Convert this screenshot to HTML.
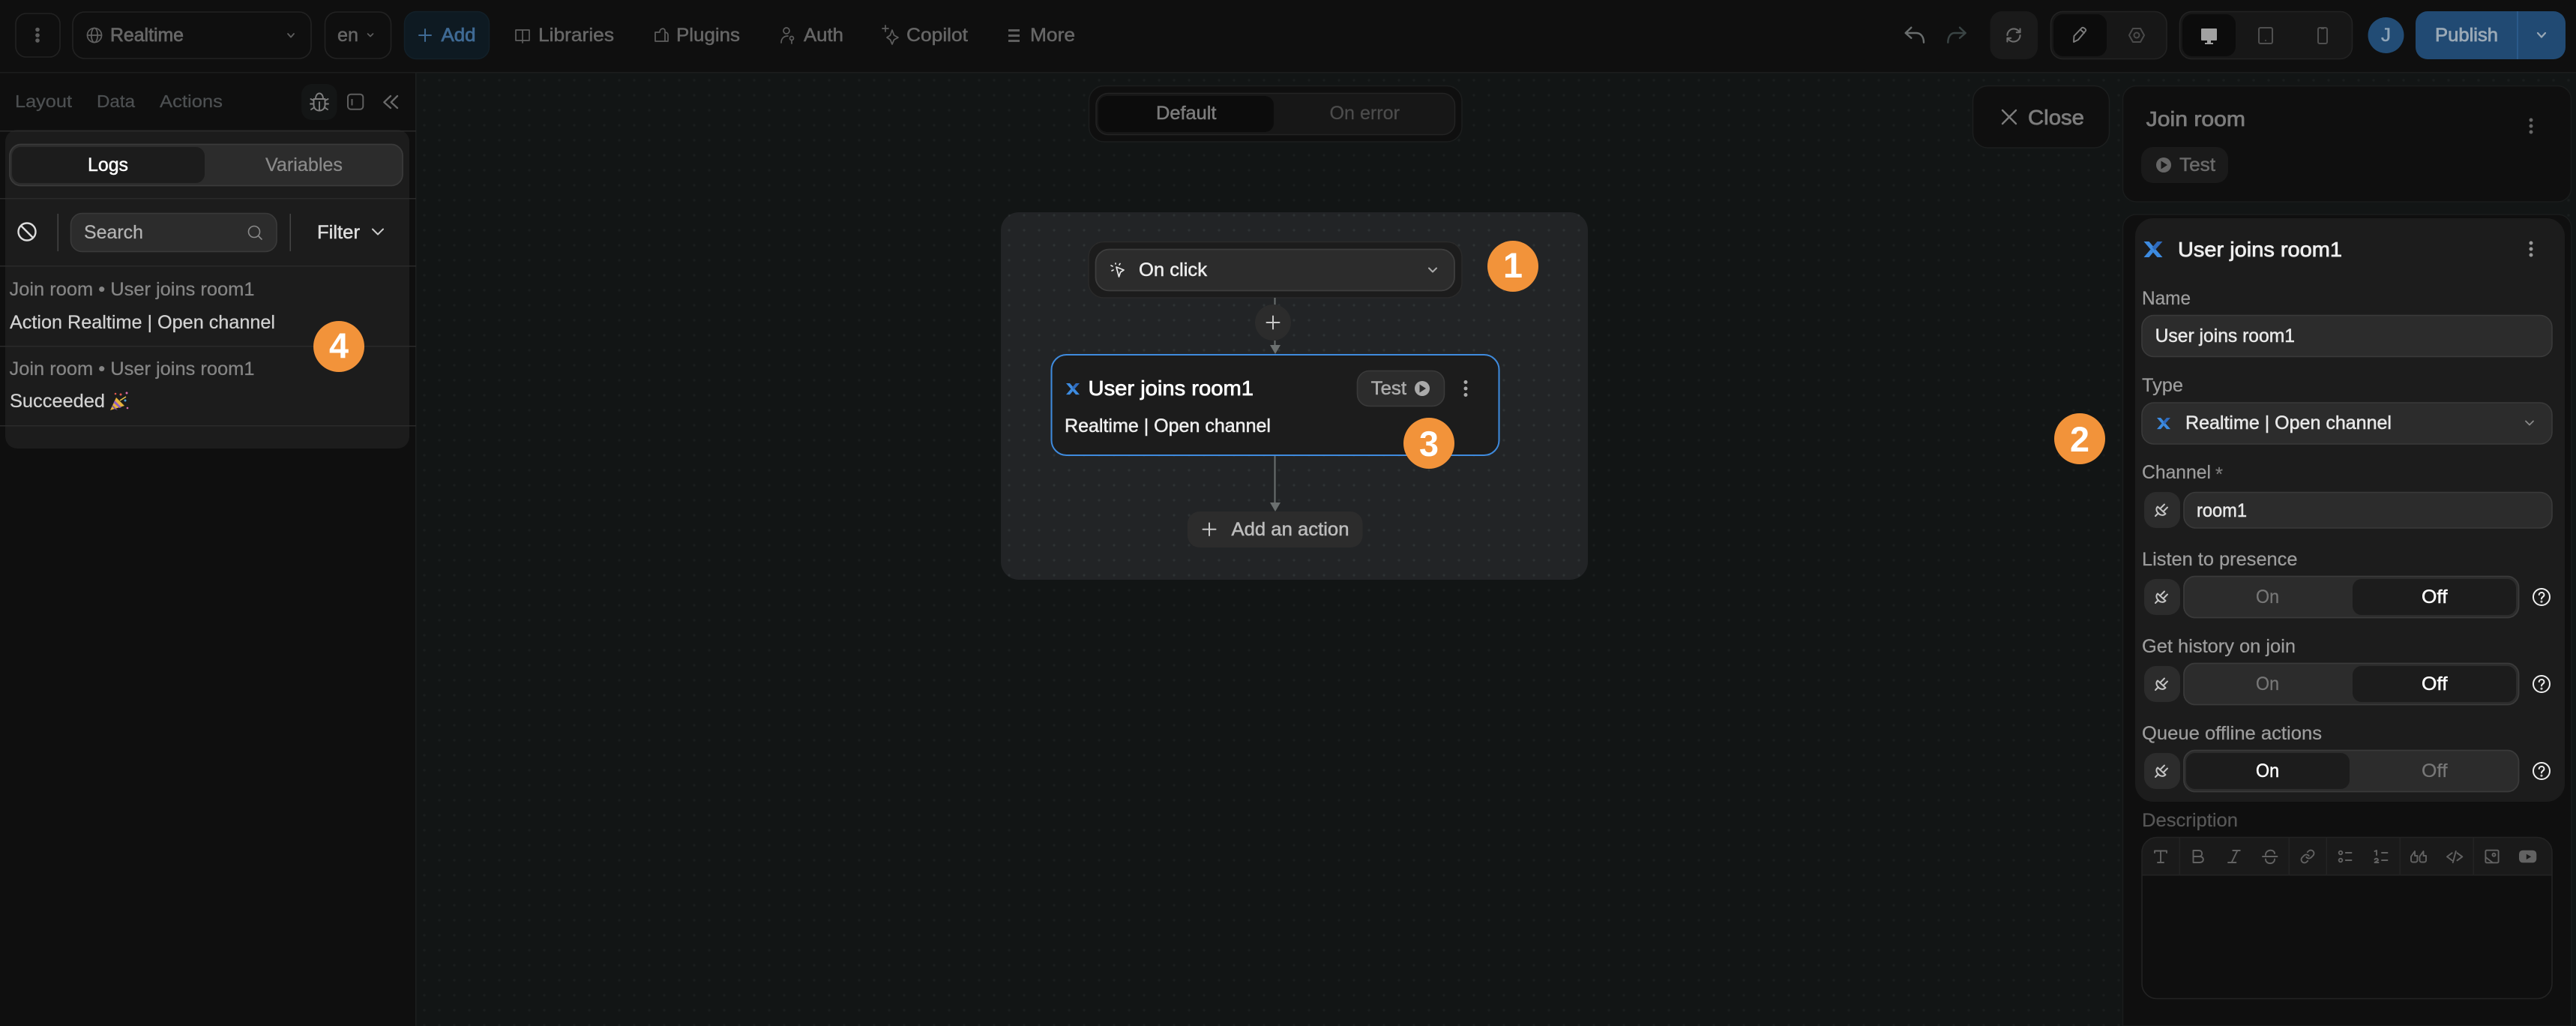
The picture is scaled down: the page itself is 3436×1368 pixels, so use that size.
<!DOCTYPE html>
<html lang="en">
<head>
<meta charset="utf-8">
<title>Realtime workflow</title>
<style>
html,body{margin:0;padding:0;background:#0f0f0f;width:3436px;height:1368px;overflow:hidden}
svg{display:block}
text{font-family:"Liberation Sans",Arial,sans-serif;font-size:25px;fill:currentColor;stroke:currentColor;stroke-width:.25px;white-space:pre}
.m{stroke-width:.5px}
.b{font-weight:700;stroke-width:0}
.s{stroke-width:.75px}
.ic{fill:none;stroke-linecap:round;stroke-linejoin:round}
</style>
</head>
<body>
<svg xmlns="http://www.w3.org/2000/svg" width="3436" height="1368" viewBox="0 0 3436 1368">
<defs>
<pattern id="d1" x="6" y="7" width="20" height="20" patternUnits="userSpaceOnUse"><circle cx="0" cy="0" r="1.6" fill="#1a1e1e"/><circle cx="20" cy="0" r="1.6" fill="#1a1e1e"/><circle cx="0" cy="20" r="1.6" fill="#1a1e1e"/><circle cx="20" cy="20" r="1.6" fill="#1a1e1e"/></pattern>
<pattern id="d2" x="6" y="7" width="20" height="20" patternUnits="userSpaceOnUse"><circle cx="0" cy="0" r="1.6" fill="#2e3234"/><circle cx="20" cy="0" r="1.6" fill="#2e3234"/><circle cx="0" cy="20" r="1.6" fill="#2e3234"/><circle cx="20" cy="20" r="1.6" fill="#2e3234"/></pattern>
<g id="plug" class="ic" stroke="#c4c4c4" stroke-width="2"><path d="M-9 8 L-5 4 M-6 -4.500 L4.500 5 C2 7.500 -2 7.500 -5 4.500 C-8 1.500 -8.500 -2 -6 -4.500 Z M-2 -2.500 L3 -7.500 M2 1.500 L7 -3.500"/></g>
<g id="help" class="ic" stroke="#eeeeee" stroke-width="2"><circle r="11"/><path d="M-3.300 -3 C-3 -7 3.500 -7 3.500 -2.800 C3.500 -.4 0 -.2 0 2.500"/><circle cx="0" cy="6.300" r=".5"/></g>
<g id="x1"><path d="M0 0 L7 0 L25 21 L18 21 Z" fill="#3d8be0"/><path d="M25 0 L18 0 L11 8 L14.500 12 Z" fill="#2f6bbd"/><path d="M0 21 L7 21 L12.500 14.500 L9 10.500 Z" fill="#3d8be0"/></g>
</defs>

<!-- base -->
<rect width="3436" height="1368" fill="#0f0f0f"/>

<!-- canvas -->
<rect x="555" y="97" width="2881" height="1271" fill="#121515"/>
<rect x="555" y="97" width="2881" height="1271" fill="url(#d1)"/>
<rect x="0" y="96" width="3436" height="1.5" fill="#1c1d1d"/>
<rect x="554" y="97" width="1.5" height="1271" fill="#1c1f1f"/>

<!-- top bar -->
<rect x="21" y="18" width="59" height="58" rx="14" fill="none" stroke="#222" stroke-width="1.6"/>
<circle cx="50" cy="39.500" r="2.800" fill="#5e5e5e"/><circle cx="50" cy="47" r="2.800" fill="#5e5e5e"/><circle cx="50" cy="54" r="2.800" fill="#5e5e5e"/>
<rect x="97" y="16" width="318" height="62" rx="16" fill="none" stroke="#222" stroke-width="1.6"/>
<g class="ic" stroke="#606060" stroke-width="1.7"><circle cx="126" cy="47" r="9.500"/><ellipse cx="126" cy="47" rx="4.200" ry="9.500"/><path d="M116.500 47 H135.500"/></g>
<text class="s" x="147" y="55" textLength="98" lengthAdjust="spacingAndGlyphs" style="color:#666;font-size:25px">Realtime</text>
<path class="ic" d="M384 45 L388 49.500 L392 45" stroke="#5e5e5e" stroke-width="1.8"/>
<rect x="433.500" y="16" width="88" height="62" rx="16" fill="none" stroke="#222" stroke-width="1.6"/>
<text class="m" x="450" y="55" textLength="28" lengthAdjust="spacingAndGlyphs" style="color:#666">en</text>
<path class="ic" d="M490.500 45 L494 48.500 L497.500 45" stroke="#5e5e5e" stroke-width="1.6"/>
<rect x="539.500" y="15.500" width="113" height="63" rx="16" fill="#0e1a22" stroke="#122029" stroke-width="1.5"/>
<path class="ic" d="M567 39 V55 M559 47 H575" stroke="#3f6a94" stroke-width="2"/>
<text class="s" x="588.500" y="55" textLength="46" lengthAdjust="spacingAndGlyphs" style="color:#3f6a94">Add</text>

<g class="ic" stroke="#5e5e5e" stroke-width="1.7"><path d="M688 40 H697 V54 H688 Z M697 40 H706 V54 H697 Z M697 54 V57"/></g>
<text class="m" x="718" y="55" textLength="101" lengthAdjust="spacingAndGlyphs" style="color:#666">Libraries</text>
<g class="ic" stroke="#5e5e5e" stroke-width="1.7"><path d="M874 43 H880 C880 37 887 37 887 41 V55 H874 Z M887 43 C889 43 891 44 891 47 V55 H887"/></g>
<text class="m" x="902" y="55" textLength="85" lengthAdjust="spacingAndGlyphs" style="color:#666">Plugins</text>
<g class="ic" stroke="#5e5e5e" stroke-width="1.7"><circle cx="1049" cy="41" r="4"/><path d="M1042 57 C1042 50 1047 48 1051 48"/><circle cx="1056" cy="51" r="2.500"/><path d="M1056 53.500 V58"/></g>
<text class="m" x="1072" y="55" textLength="53" lengthAdjust="spacingAndGlyphs" style="color:#666">Auth</text>
<g class="ic" stroke="#5e5e5e" stroke-width="1.700"><path d="M1190 40 L1192.500 47 L1198 50 L1192.500 53 L1190 59 L1187.500 53 L1183 50 L1187.500 47 Z"/><path d="M1181 34 V42 M1177 38 H1185"/></g>
<text class="m" x="1209" y="55" textLength="82" lengthAdjust="spacingAndGlyphs" style="color:#666">Copilot</text>
<g fill="#5e5e5e"><rect x="1345" y="39" width="15" height="3"/><rect x="1345" y="46" width="15" height="3"/><rect x="1345" y="53" width="15" height="3"/></g>
<text class="m" x="1374" y="55" textLength="60" lengthAdjust="spacingAndGlyphs" style="color:#666">More</text>

<path class="ic" d="M2549.300 36.700 L2541.700 44 L2549.300 50.700 M2541.700 44 H2556 C2562 44 2566 49 2566 56.700" stroke="#6a6e6e" stroke-width="2.400"/>
<path class="ic" d="M2614 36.700 L2621.700 44 L2614 50.700 M2621.700 44 H2607 C2602 44 2598.300 49 2598.300 56.700" stroke="#3a4444" stroke-width="2.400"/>
<rect x="2654.500" y="15" width="63.500" height="64" rx="16" fill="#1a1a1a"/>
<g transform="translate(2686 47) scale(.95) translate(-12 -12)"><path class="ic" stroke="#6c6c6c" stroke-width="2.200" d="M3 12a9 9 0 0 1 9-9 9.750 9.750 0 0 1 6.740 2.740L21 8 M21 3v5h-5 M21 12a9 9 0 0 1-9 9 9.750 9.750 0 0 1-6.740-2.740L3 16 M8 16H3v5"/></g>
<rect x="2735.500" y="15.500" width="154.500" height="63" rx="16" fill="#171717" stroke="#232323" stroke-width="1.500"/>
<rect x="2739" y="19" width="71" height="56" rx="13" fill="#0c0c0c"/>
<g class="ic" stroke="#7c7c7c" stroke-width="1.900"><path d="M2766 56 L2766.500 48 L2777 37 C2779 36 2783 39 2782 41 L2772 53 Z M2775 39.500 L2780 44"/></g>
<g class="ic" stroke="#4a4a4a" stroke-width="2"><path d="M2840 47 L2845 38 H2855 L2860 47 L2855 56 H2845 Z"/><circle cx="2850" cy="47" r="3.500"/></g>
<rect x="2907.500" y="15.500" width="230" height="63" rx="16" fill="#171717" stroke="#232323" stroke-width="1.500"/>
<rect x="2911" y="19" width="71" height="56" rx="13" fill="#0c0c0c"/>
<rect x="2936" y="38" width="21" height="16" rx="1" fill="#a2a2a2"/><path d="M2944 54 H2949 V57 H2952 V59 H2941 V57 H2944 Z" fill="#a2a2a2"/>
<rect x="3013" y="37" width="18" height="21" rx="2" fill="none" stroke="#4f4f4f" stroke-width="2"/><circle cx="3022" cy="54" r="1" fill="#4f4f4f"/>
<rect x="3092" y="37" width="12" height="21" rx="2" fill="none" stroke="#4f4f4f" stroke-width="2"/><rect x="3096" y="37" width="4" height="2" fill="#4f4f4f"/>
<circle cx="3182.500" cy="47" r="24" fill="#224c75"/>
<text class="m" x="3176" y="55" textLength="13" lengthAdjust="spacingAndGlyphs" style="color:#8fa5b8">J</text>
<path d="M3238 15 H3358 V79 H3238 A16 16 0 0 1 3222 63 V31 A16 16 0 0 1 3238 15 Z" fill="#214a73"/>
<path d="M3359 15 H3406 A16 16 0 0 1 3422 31 V63 A16 16 0 0 1 3406 79 H3359 Z" fill="#214a73"/>
<rect x="3357" y="15" width="2" height="64" fill="#2a5a8a"/>
<text class="s" x="3248" y="55" textLength="84" lengthAdjust="spacingAndGlyphs" style="color:#9aa9b6">Publish</text>
<path class="ic" d="M3385 44 L3390 49.500 L3395 44" stroke="#9aa9b6" stroke-width="2.200"/>

<!-- left panel -->
<text x="20" y="143" textLength="76" lengthAdjust="spacingAndGlyphs" style="color:#4d5052;font-size:23px">Layout</text>
<text x="129" y="143" textLength="51" lengthAdjust="spacingAndGlyphs" style="color:#4d5052;font-size:23px">Data</text>
<text x="213" y="143" textLength="84" lengthAdjust="spacingAndGlyphs" style="color:#4d5052;font-size:23px">Actions</text>
<rect x="402" y="112" width="47.500" height="48" rx="14" fill="#141616"/>
<path class="ic" stroke="#7f7f7f" stroke-width="1.900" d="M418.500 132 H433.500 M421 132 C421 122 431 122 431 132 M418.500 132 V140 C418.500 150 433.500 150 433.500 140 V132 M426 136 V147 M414.500 132 L418.500 134 M437.500 132 L433.500 134 M414 138.500 H418 M438 138.500 H434 M415 146 L419.500 143 M437 146 L432.500 143"/>
<rect x="464" y="125.700" width="20.300" height="20" rx="4" fill="none" stroke="#5f5f5f" stroke-width="2"/><path d="M469.500 132 V140.500" stroke="#5f5f5f" stroke-width="2"/>
<path class="ic" stroke="#6a6a6a" stroke-width="2.300" d="M521 128 L512.300 136.300 L521 144 M530 128 L521.700 136.300 L530 144"/>

<rect x="7" y="173" width="539" height="425" rx="16" fill="#1c1c1c"/>
<g fill="#2a2a2a"><rect x="0" y="174" width="555" height="1.500"/><rect x="0" y="264" width="555" height="1.500"/><rect x="0" y="354" width="555" height="1.500"/><rect x="0" y="461" width="555" height="1.500"/><rect x="0" y="567" width="555" height="1.500"/></g>
<rect x="13" y="192.500" width="524" height="55" rx="15" fill="#2c2c2c" stroke="#3a3a3a" stroke-width="1.800"/>
<rect x="16" y="196" width="257" height="48" rx="12" fill="#1c1c1c"/>
<text class="m" x="117" y="228" textLength="54" lengthAdjust="spacingAndGlyphs" style="color:#fff">Logs</text>
<text x="354" y="228" textLength="103" lengthAdjust="spacingAndGlyphs" style="color:#8a8a8a">Variables</text>

<g class="ic" stroke="#dddddd" stroke-width="2.400"><circle cx="36" cy="309" r="11.500"/><path d="M28 301 L44 317"/></g>
<rect x="76.500" y="285" width="1.500" height="50" fill="#444"/>
<rect x="94.500" y="284.500" width="274.500" height="51" rx="15" fill="#2c2c2c" stroke="#3a3a3a" stroke-width="1.600"/>
<text x="112" y="318" textLength="79" lengthAdjust="spacingAndGlyphs" style="color:#b4b4b4">Search</text>
<g class="ic" stroke="#8a8a8a" stroke-width="1.600"><circle cx="339" cy="309" r="7.500"/><path d="M345 315 L349 319"/></g>
<rect x="386.500" y="285" width="1.500" height="50" fill="#444"/>
<text class="m" x="423" y="318" textLength="57" lengthAdjust="spacingAndGlyphs" style="color:#ddd">Filter</text>
<path class="ic" d="M497 305.500 L504 312.500 L511 305.500" stroke="#ccc" stroke-width="2"/>

<text x="12.500" y="394" textLength="327" lengthAdjust="spacingAndGlyphs" style="color:#858585">Join room • User joins room1</text>
<text x="13" y="438" textLength="354" lengthAdjust="spacingAndGlyphs" style="color:#d2d2d2">Action Realtime | Open channel</text>
<text x="12.500" y="500" textLength="327" lengthAdjust="spacingAndGlyphs" style="color:#858585">Join room • User joins room1</text>
<text x="13" y="543" textLength="127" lengthAdjust="spacingAndGlyphs" style="color:#d2d2d2">Succeeded</text>
<g><path d="M147 547 L155 530 L166 541 Z" fill="#e6b23c"/><path d="M150 540 L157 547 L153 545.500 L149.500 542 Z" fill="#7a4fa8"/><path d="M153 534 L162 543 L159.500 544 L151.500 537 Z" fill="#8f5cc0"/><circle cx="161" cy="526" r="1.500" fill="#e0574f"/><circle cx="169" cy="524" r="1.500" fill="#d86aa8"/><circle cx="167" cy="534" r="1.500" fill="#4ea3d8"/><circle cx="154" cy="525" r="1.300" fill="#e0574f"/><circle cx="170" cy="544" r="1.300" fill="#d86aa8"/><path d="M160 534 L168 529" stroke="#e8c24a" stroke-width="1.500"/></g>

<!-- Default / on error -->
<rect x="1452.500" y="114.500" width="497.500" height="74.500" rx="20" fill="#0f0f0f" stroke="#1c1e1e" stroke-width="1.500"/>
<rect x="1462" y="124.500" width="478.500" height="55" rx="16" fill="#171717" stroke="#232323" stroke-width="1.500"/>
<rect x="1465" y="128" width="234" height="48" rx="12" fill="#0c0c0c"/>
<text class="m" x="1542" y="159" textLength="80.500" lengthAdjust="spacingAndGlyphs" style="color:#7c7c7c">Default</text>
<text x="1773.500" y="159" textLength="93.500" lengthAdjust="spacingAndGlyphs" style="color:#4c4c4c">On error</text>

<!-- flow panel -->
<rect x="1335" y="283" width="783" height="490" rx="24" fill="#222426"/>
<rect x="1335" y="283" width="783" height="490" rx="24" fill="url(#d2)"/>
<rect x="1452" y="322.500" width="498" height="74.500" rx="20" fill="#1c1c1c" stroke="#2a2a2a" stroke-width="1.500"/>
<rect x="1461.500" y="332.500" width="478.500" height="55" rx="18" fill="#2c2c2c" stroke="#3e3e3e" stroke-width="1.800"/>
<g class="ic" stroke="#e8e8e8" stroke-width="1.700"><path d="M1489 356 L1499 360 L1494.500 363 L1492.500 369 Z"/><path d="M1488 351 L1488 352 M1482 354 L1484 355 M1483 361 L1485 360 M1494 351.500 L1493 353"/></g>
<text class="m" x="1519" y="368" textLength="91" lengthAdjust="spacingAndGlyphs" style="color:#eee">On click</text>
<path class="ic" d="M1906 357.500 L1911 362.500 L1916 357.500" stroke="#aaa" stroke-width="2"/>

<rect x="1699.500" y="397" width="2" height="11" fill="#6b7070"/>
<circle cx="1698" cy="430" r="24" fill="#2c2c2c"/>
<path class="ic" d="M1698 421.500 V438.500 M1689.500 430 H1706.500" stroke="#c8c8c8" stroke-width="2"/>
<rect x="1699.500" y="454" width="2" height="7" fill="#6b7070"/>
<path d="M1694 460 H1708 L1701 472 Z" fill="#6b7070"/>

<rect x="1402.500" y="473" width="597" height="134" rx="20" fill="#1c1c1c" stroke="#3f8bde" stroke-width="2"/>
<use href="#x1" transform="translate(1422 511) scale(.72)"/>
<text class="s" x="1451.500" y="527" textLength="220.500" lengthAdjust="spacingAndGlyphs" style="color:#fff;font-size:28px">User joins room1</text>
<rect x="1810.500" y="494.500" width="116" height="47" rx="16" fill="#2c2c2c" stroke="#3a3a3a" stroke-width="1.600"/>
<text class="m" x="1828.700" y="526" textLength="47.300" lengthAdjust="spacingAndGlyphs" style="color:#ababab">Test</text>
<circle cx="1897" cy="518" r="10" fill="#aaa"/><path d="M1893.500 512.500 L1902 518 L1893.500 523.500 Z" fill="#2c2c2c"/>
<circle cx="1955" cy="509.500" r="2.500" fill="#aaa"/><circle cx="1955" cy="518" r="2.500" fill="#aaa"/><circle cx="1955" cy="526.500" r="2.500" fill="#aaa"/>
<text x="1420" y="576" textLength="275" lengthAdjust="spacingAndGlyphs" class="m" style="color:#eee">Realtime | Open channel</text>

<rect x="1699.500" y="608" width="2" height="63" fill="#6b7070"/>
<path d="M1694 670 H1708 L1701 682 Z" fill="#6b7070"/>
<rect x="1584" y="682" width="233.500" height="48" rx="16" fill="#2c2c2c"/>
<path class="ic" d="M1613 697.500 V714 M1604.500 705.700 H1621.500" stroke="#c8c8c8" stroke-width="2"/>
<text class="m" x="1642.500" y="714" textLength="157" lengthAdjust="spacingAndGlyphs" style="color:#bcbcbc">Add an action</text>

<!-- Close / right header -->
<rect x="2631.500" y="114.500" width="182" height="82.500" rx="20" fill="#0f0f0f" stroke="#1c1e1e" stroke-width="1.500"/>
<path class="ic" d="M2671 147 L2689 165 M2689 147 L2671 165" stroke="#7c7c7c" stroke-width="2.400"/>
<text class="s" x="2705" y="166" textLength="75" lengthAdjust="spacingAndGlyphs" style="color:#7c7c7c;font-size:28px">Close</text>

<rect x="2831.500" y="114.500" width="598" height="154.500" rx="18" fill="#0f0f0f" stroke="#1a1c1c" stroke-width="1.500"/>
<text class="s" x="2862.700" y="168" textLength="132.300" lengthAdjust="spacingAndGlyphs" style="color:#7c7c7c;font-size:28px">Join room</text>
<circle cx="3376" cy="160" r="2.500" fill="#666"/><circle cx="3376" cy="168" r="2.500" fill="#666"/><circle cx="3376" cy="176" r="2.500" fill="#666"/>
<rect x="2856" y="196" width="116" height="48" rx="16" fill="#1a1a1a"/>
<circle cx="2886" cy="220" r="10" fill="#666"/><path d="M2882.500 214.500 L2891 220 L2882.500 225.500 Z" fill="#1a1a1a"/>
<text class="m" x="2907" y="228" textLength="48" lengthAdjust="spacingAndGlyphs" style="color:#6a6a6a">Test</text>

<!-- right panel -->
<path d="M2831.500 1368 V304 A18 18 0 0 1 2849.500 286 H3412 A18 18 0 0 1 3430 304 V1368 Z" fill="#0f0f0f" stroke="#1a1c1c" stroke-width="1.500"/>
<rect x="2848" y="291" width="573" height="778" rx="24" fill="#1c1c1c"/>
<use href="#x1" transform="translate(2859.500 322)"/>
<text class="s" x="2905" y="342" textLength="219" lengthAdjust="spacingAndGlyphs" style="color:#eee;font-size:28px">User joins room1</text>
<circle cx="3376" cy="324" r="2.500" fill="#999"/><circle cx="3376" cy="332" r="2.500" fill="#999"/><circle cx="3376" cy="340" r="2.500" fill="#999"/>

<text x="2857" y="406" textLength="65" lengthAdjust="spacingAndGlyphs" style="color:#9d9d9d">Name</text>
<rect x="2857" y="420.500" width="547" height="55" rx="16" fill="#2c2c2c" stroke="#3a3a3a" stroke-width="1.600"/>
<text class="m" x="2874.600" y="456" textLength="186.400" lengthAdjust="spacingAndGlyphs" style="color:#e8e8e8">User joins room1</text>

<text x="2857" y="522" textLength="55" lengthAdjust="spacingAndGlyphs" style="color:#9d9d9d">Type</text>
<rect x="2857" y="537" width="547" height="55" rx="16" fill="#2c2c2c" stroke="#3a3a3a" stroke-width="1.600"/>
<use href="#x1" transform="translate(2877 557) scale(.72)"/>
<text class="m" x="2915" y="572" textLength="275" lengthAdjust="spacingAndGlyphs" style="color:#e8e8e8">Realtime | Open channel</text>
<path class="ic" d="M3369 561.500 L3374 566.500 L3379 561.500" stroke="#8a8a8a" stroke-width="1.800"/>

<text x="2857" y="638" textLength="92" lengthAdjust="spacingAndGlyphs" style="color:#9d9d9d">Channel</text>
<text x="2955" y="641" textLength="10" lengthAdjust="spacingAndGlyphs" style="color:#7a7a7a;font-size:26px">*</text>
<rect x="2860" y="656" width="48" height="48" rx="16" fill="#2c2c2c"/>
<use href="#plug" transform="translate(2884 680)"/>
<rect x="2913" y="656.500" width="491" height="47.500" rx="16" fill="#2c2c2c" stroke="#3a3a3a" stroke-width="1.600"/>
<text class="m" x="2930" y="689" textLength="67" lengthAdjust="spacingAndGlyphs" style="color:#e8e8e8">room1</text>

<text x="2857" y="754" textLength="207.500" lengthAdjust="spacingAndGlyphs" style="color:#9d9d9d">Listen to presence</text>
<rect x="2860" y="772" width="48" height="48" rx="16" fill="#2c2c2c"/>
<use href="#plug" transform="translate(2884 796)"/>
<rect x="2913" y="768.500" width="446.500" height="55" rx="15" fill="#2c2c2c" stroke="#3a3a3a" stroke-width="1.800"/>
<rect x="3138" y="772" width="218" height="48" rx="12" fill="#1c1c1c"/>
<text x="3009" y="804" textLength="31" lengthAdjust="spacingAndGlyphs" style="color:#777">On</text>
<text class="m" x="3230" y="804" textLength="34.500" lengthAdjust="spacingAndGlyphs" style="color:#fff">Off</text>
<use href="#help" transform="translate(3390 796)"/>

<text x="2857" y="870" textLength="205" lengthAdjust="spacingAndGlyphs" style="color:#9d9d9d">Get history on join</text>
<rect x="2860" y="888" width="48" height="48" rx="16" fill="#2c2c2c"/>
<use href="#plug" transform="translate(2884 912)"/>
<rect x="2913" y="884.500" width="446.500" height="55" rx="15" fill="#2c2c2c" stroke="#3a3a3a" stroke-width="1.800"/>
<rect x="3138" y="888" width="218" height="48" rx="12" fill="#1c1c1c"/>
<text x="3009" y="920" textLength="31" lengthAdjust="spacingAndGlyphs" style="color:#777">On</text>
<text class="m" x="3230" y="920" textLength="34.500" lengthAdjust="spacingAndGlyphs" style="color:#fff">Off</text>
<use href="#help" transform="translate(3390 912)"/>

<text x="2857" y="986" textLength="240" lengthAdjust="spacingAndGlyphs" style="color:#9d9d9d">Queue offline actions</text>
<rect x="2860" y="1004" width="48" height="48" rx="16" fill="#2c2c2c"/>
<use href="#plug" transform="translate(2884 1028)"/>
<rect x="2913" y="1000.500" width="446.500" height="55" rx="15" fill="#2c2c2c" stroke="#3a3a3a" stroke-width="1.800"/>
<rect x="2916" y="1004" width="218" height="48" rx="12" fill="#1c1c1c"/>
<text class="m" x="3009" y="1036" textLength="31" lengthAdjust="spacingAndGlyphs" style="color:#fff">On</text>
<text x="3230" y="1036" textLength="34.500" lengthAdjust="spacingAndGlyphs" style="color:#777">Off</text>
<use href="#help" transform="translate(3390 1028)"/>

<text x="2857" y="1102" textLength="128" lengthAdjust="spacingAndGlyphs" style="color:#575757">Description</text>

<!-- editor -->
<path d="M2857 1167 V1136 A20 20 0 0 1 2877 1116.500 H3384 A20 20 0 0 1 3404 1136 V1167 Z" fill="#1a1a1a"/>
<rect x="2857" y="1116.500" width="547" height="215" rx="20" fill="none" stroke="#232323" stroke-width="1.600"/>
<rect x="2857" y="1166" width="547" height="1.500" fill="#232323"/>
<g fill="#232323"><rect x="2906.500" y="1117" width="1.500" height="49"/><rect x="3052.500" y="1117" width="1.500" height="49"/><rect x="3102.500" y="1117" width="1.500" height="49"/><rect x="3200.500" y="1117" width="1.500" height="49"/><rect x="3298.500" y="1117" width="1.500" height="49"/></g>
<g class="ic" stroke="#626262" stroke-width="1.900">
<path d="M2874 1137 V1134.500 H2890 V1137 M2882 1134.500 V1150 M2878 1150 H2886"/>
<path d="M2925.500 1134 V1150 H2934 C2940.500 1150 2940.500 1142 2934 1142 H2925.500 M2925.500 1134 H2933 C2938.500 1134 2938.500 1142 2933 1142"/>
<path d="M2978.300 1134 H2987.800 M2972 1150 H2982.400 M2984.400 1134 L2976.600 1150"/>
<path d="M3018 1142 H3037.500 M3022 1140 C3022 1132 3034 1132 3034 1138 M3022 1145.500 C3022 1153 3034 1153 3034 1145.500"/>
<g transform="translate(3078 1142) scale(.85) translate(-12 -12)"><path stroke-width="2.200" d="M10 13a5 5 0 0 0 7.540.54l3-3a5 5 0 0 0-7.070-7.070l-1.720 1.710 M14 11a5 5 0 0 0-7.540-.54l-3 3a5 5 0 0 0 7.070 7.070l1.710-1.710"/></g>
<circle cx="3122" cy="1137" r="2.300"/><circle cx="3122" cy="1147" r="2.300"/><path d="M3128.800 1137 H3136.500 M3128.800 1147 H3136.500"/>
<path d="M3167.500 1135 L3170 1134 V1140 M3167.500 1146 C3169 1143.800 3172 1144.800 3172 1147 L3167.500 1150 H3172.500 M3177 1137 H3184.500 M3177 1147 H3184.500"/>
<path d="M3216 1146 V1142 L3221 1135 V1141 H3224.400 V1146.500 A2.500 2.500 0 0 1 3222 1149.500 H3218.500 A2.500 2.500 0 0 1 3216 1147 Z"/>
<path d="M3227.500 1146 V1142 L3232.500 1135 V1141 H3236 V1146.500 A2.500 2.500 0 0 1 3233.500 1149.500 H3230 A2.500 2.500 0 0 1 3227.500 1147 Z"/>
<path d="M3270.700 1137.300 L3264 1142.300 L3270.700 1147.300 M3277.500 1137.300 L3284.300 1142.300 L3277.500 1147.300 M3275.800 1135 L3271.800 1150"/>
<rect x="3315.400" y="1133.700" width="17.200" height="16.600" rx="1.500"/><circle cx="3326.500" cy="1139.700" r="2"/><path d="M3315.400 1143 L3325 1150.300"/>
</g>
<rect x="3360" y="1133.700" width="23.300" height="16.600" rx="5" fill="#626262"/><path d="M3369.800 1138.700 L3376.200 1142.300 L3369.800 1146 Z" fill="#1a1a1a"/>

<!-- badges -->
<g fill="#f2933a"><circle cx="2018" cy="355" r="34"/><circle cx="2774" cy="585" r="34"/><circle cx="1906" cy="591" r="34"/><circle cx="452" cy="462" r="34"/></g>
<text class="b" x="2005" y="370" textLength="26" lengthAdjust="spacingAndGlyphs" style="color:#fff;font-size:47px">1</text>
<text class="b" x="2761" y="602" textLength="26" lengthAdjust="spacingAndGlyphs" style="color:#fff;font-size:47px">2</text>
<text class="b" x="1893" y="608" textLength="26" lengthAdjust="spacingAndGlyphs" style="color:#fff;font-size:47px">3</text>
<text class="b" x="439" y="477" textLength="26" lengthAdjust="spacingAndGlyphs" style="color:#fff;font-size:47px">4</text>
</svg>
</body>
</html>
